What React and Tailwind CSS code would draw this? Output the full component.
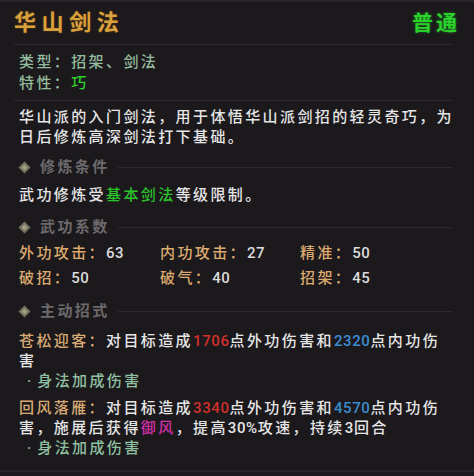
import React from "react";

const FONT = { fontFamily: 'Roboto, "Noto Sans CJK SC", sans-serif' };

function Diamond() {
  return (
    <svg width="13" height="13" viewBox="0 0 13 13" className="shrink-0">
      <polygon points="6.5,0.5 12.5,6.5 6.5,12.5 0.5,6.5" fill="#77735f" />
      <polygon points="6.5,3.5 9.5,6.5 6.5,9.5 3.5,6.5" fill="#a39e86" />
    </svg>
  );
}

function SectionHeader({ children, mt }) {
  return (
    <div className={`flex items-center h-[20px] pl-[18px] pr-[22px] ${mt}`}>
      <Diamond />
      <span className="ml-[9px] text-[15px] leading-[20px] tracking-[2.4px] text-[#6c696c] font-bold">
        {children}
      </span>
      <div className="flex-1 h-px bg-[#2c292d] ml-[8px]" />
    </div>
  );
}

const N = ({ c, children }) => (
  <span className={`tracking-[0.6px] ${c}`}>{children}</span>
);

function Stat({ label, value }) {
  return (
    <div className="flex">
      <span className="text-[#dcaa6e]">{label}：</span>
      <span className="tracking-[0.5px] text-[#dcdcdc]">{value}</span>
    </div>
  );
}

export default function App() {
  return (
    <div
      style={FONT}
      className="relative w-[474px] h-[476px] overflow-hidden bg-[#1c191d] border-t-2 border-t-[#29252a] text-[15px] leading-[20px] tracking-[2.4px] font-medium text-[#e6e6e6]"
    >
      {/* header */}
      <div className="flex justify-between items-center pt-[6px] pl-[14px] pr-[14px] h-[36px]">
        <span
          className="text-[22px] leading-[28px] font-bold tracking-[5.6px] text-[#d9a13c]"
          style={{ textShadow: "0 0 2px rgba(160,90,10,0.6)" }}
        >
          华山剑法
        </span>
        <span
          className="text-[21px] leading-[28px] font-bold tracking-[3px] text-[#2bd12b]"
          style={{ textShadow: "0 0 3px rgba(40,200,40,0.55)" }}
        >
          普通
        </span>
      </div>
      <div className="mt-[6px] ml-[14px] mr-[22px] h-px bg-[#2e2b30]" />

      {/* type */}
      <div className="mt-[7px] pl-[19px] leading-[21px] text-[#94bc9d]">
        <div>类型：招架、剑法</div>
        <div>
          特性：<span className="text-[#2ccf2c]">巧</span>
        </div>
      </div>
      <div className="mt-[6px] ml-[14px] mr-[22px] h-px bg-[#2e2b30]" />

      {/* description */}
      <div className="mt-[6px] pl-[19px] whitespace-nowrap">
        <div>华山派的入门剑法，用于体悟华山派剑招的轻灵奇巧，为</div>
        <div>日后修炼高深剑法打下基础。</div>
      </div>

      <SectionHeader mt="mt-[10px]">修炼条件</SectionHeader>
      <div className="mt-[8px] pl-[19px] whitespace-nowrap">
        武功修炼受<span className="text-[#2bc42b]">基本剑法</span>等级限制。
      </div>

      <SectionHeader mt="mt-[12px]">武功系数</SectionHeader>
      <div className="mt-[6px] pl-[19px] grid grid-cols-[141px_140px_1fr] gap-y-[5px] whitespace-nowrap">
        <Stat label="外功攻击" value="63" />
        <Stat label="内功攻击" value="27" />
        <Stat label="精准" value="50" />
        <Stat label="破招" value="50" />
        <Stat label="破气" value="40" />
        <Stat label="招架" value="45" />
      </div>

      <SectionHeader mt="mt-[13px]">主动招式</SectionHeader>
      <div className="mt-[10px] pl-[19px] whitespace-nowrap">
        <div>
          <span className="text-[#d9ab74]">苍松迎客：</span>对目标造成
          <N c="text-[#d2302b]">1706</N>点外功伤害和
          <N c="text-[#3b8ccf]">2320</N>点内功伤
        </div>
        <div>害</div>
        <div className="flex items-center">
          <span className="ml-[8px] text-[#9aa89e] tracking-normal">·</span>
          <span className="ml-[6px] text-[#8fc0a0]">身法加成伤害</span>
        </div>
      </div>
      <div className="mt-[7px] pl-[19px] whitespace-nowrap">
        <div>
          <span className="text-[#d9ab74]">回风落雁：</span>对目标造成
          <N c="text-[#d2302b]">3340</N>点外功伤害和
          <N c="text-[#3b8ccf]">4570</N>点内功伤
        </div>
        <div>
          害，施展后获得<span className="text-[#d22ea6]">御风</span>，提高
          <N c="">30%</N>攻速，持续<N c="">3</N>回合
        </div>
        <div className="flex items-center">
          <span className="ml-[8px] text-[#9aa89e] tracking-normal">·</span>
          <span className="ml-[6px] text-[#8fc0a0]">身法加成伤害</span>
        </div>
      </div>

      <div className="absolute left-0 right-0 bottom-[4px] h-[2px] bg-[#28242a]" />
    </div>
  );
}
